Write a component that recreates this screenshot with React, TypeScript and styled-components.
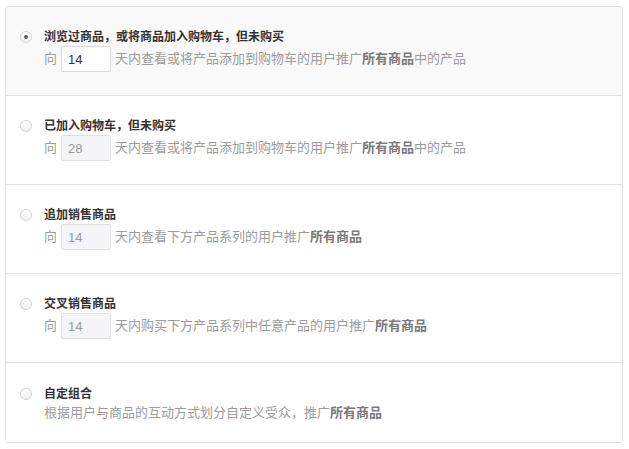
import styled, { createGlobalStyle } from "styled-components";

const GlobalStyle = createGlobalStyle`
  body {
    margin: 0;
    background: #ffffff;
    font-family: "Liberation Sans", "Noto Sans CJK SC", sans-serif;
  }
`;

const Page = styled.div`
  padding: 6px 6px 6px 5px;
`;

const Card = styled.div`
  border: 1px solid #e0e0e0;
  border-radius: 3px;
  overflow: hidden;
  background: #ffffff;
`;

const Row = styled.label<{ selected?: boolean; short?: boolean }>`
  display: flex;
  align-items: flex-start;
  gap: 12px;
  height: ${(p) => (p.short ? "79px" : "89px")};
  box-sizing: border-box;
  padding: ${(p) => (p.short ? "23px" : "22px")} 0 0 14px;
  background: ${(p) => (p.selected ? "#f9f9f9" : "#ffffff")};
  border-bottom: 1px solid #e2e2e2;
  cursor: pointer;

  &:last-child {
    border-bottom: none;
  }
`;

const Radio = styled.span<{ checked?: boolean }>`
  flex: none;
  width: 12px;
  height: 12px;
  margin-top: 2px;
  border-radius: 50%;
  border: 1px solid #d2d2d2;
  box-sizing: border-box;
  background: linear-gradient(#ffffff, #f0f0f0);
  display: grid;
  place-items: center;

  &::after {
    content: "";
    width: 4px;
    height: 4px;
    border-radius: 50%;
    background: ${(p) => (p.checked ? "#555c66" : "transparent")};
  }
`;

const Body = styled.div`
  display: flex;
  flex-direction: column;
  gap: 1px;
`;

const Title = styled.div`
  font-size: 12px;
  line-height: 16px;
  font-weight: bold;
  color: #333333;
`;

const Detail = styled.div`
  display: flex;
  align-items: center;
  gap: 4px;
  font-size: 13px;
  line-height: 18px;
  color: #9c9c9c;
`;

const Plain = styled.div`
  font-size: 13px;
  line-height: 18px;
  color: #9c9c9c;
  margin-top: 1px;
`;

const Strong = styled.b`
  color: #7a7a7a;
  font-weight: bold;
`;

const DaysInput = styled.input`
  width: 50px;
  height: 26px;
  box-sizing: border-box;
  border: 1px solid #d9d9d9;
  border-radius: 2px;
  padding: 0 6px;
  font-family: "Liberation Sans", sans-serif;
  font-size: 13px;
  color: #333333;
  background: #ffffff;
  outline: none;

  &:disabled {
    background: #f5f5f7;
    color: #9a9a9a;
    border-color: #e0e0e0;
  }
`;

type Option = {
  title: string;
  days: string;
  before: string;
  after?: string;
};

const options: Option[] = [
  {
    title: "浏览过商品，或将商品加入购物车，但未购买",
    days: "14",
    before: "天内查看或将产品添加到购物车的用户推广",
    after: "中的产品",
  },
  {
    title: "已加入购物车，但未购买",
    days: "28",
    before: "天内查看或将产品添加到购物车的用户推广",
    after: "中的产品",
  },
  {
    title: "追加销售商品",
    days: "14",
    before: "天内查看下方产品系列的用户推广",
  },
  {
    title: "交叉销售商品",
    days: "14",
    before: "天内购买下方产品系列中任意产品的用户推广",
  },
];

export default function App() {
  const selected = 0;
  return (
    <Page>
      <GlobalStyle />
      <Card>
        {options.map((o, i) => (
          <Row key={o.title} selected={i === selected}>
            <Radio checked={i === selected} />
            <Body>
              <Title>{o.title}</Title>
              <Detail>
                <span>向</span>
                <DaysInput defaultValue={o.days} disabled={i !== selected} />
                <span>
                  {o.before}
                  <Strong>所有商品</Strong>
                  {o.after}
                </span>
              </Detail>
            </Body>
          </Row>
        ))}
        <Row short>
          <Radio />
          <Body>
            <Title>自定组合</Title>
            <Plain>
              根据用户与商品的互动方式划分自定义受众，推广<Strong>所有商品</Strong>
            </Plain>
          </Body>
        </Row>
      </Card>
    </Page>
  );
}
